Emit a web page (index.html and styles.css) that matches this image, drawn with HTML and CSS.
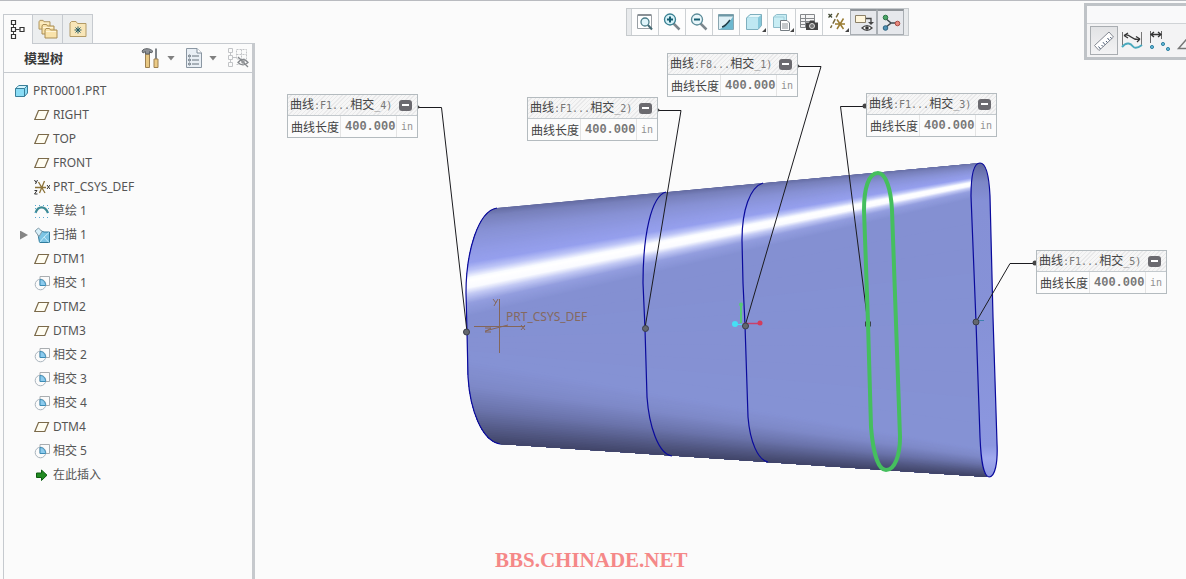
FILE: index.html
```html
<!DOCTYPE html>
<html lang="zh-CN">
<head>
<meta charset="utf-8">
<title>PRT0001.PRT</title>
<link rel="stylesheet" href="styles.css">
</head>
<body>
<svg class="sprite" aria-hidden="true">
  <symbol id="i-plane" viewBox="0 0 16 16"><path d="M4.500 3.500H14.500L10.800 12.500H.8Z" fill="#fffdf2" stroke="#7b6a4a" stroke-width="1.200"/></symbol>
  <symbol id="i-cross" viewBox="0 0 16 16"><path d="M6 1.500H15.500V10.500H6Z" fill="none" stroke="#a9adb0"/><circle cx="6.500" cy="9.500" r="5.300" fill="none" stroke="#a9b4bd"/><path d="M6 4.500C9.500 4.500 11.500 7 11.600 10.500H6Z" fill="#8ccbee" stroke="#3d8cb5"/></symbol>
  <symbol id="i-part" viewBox="0 0 16 16"><path d="M1.500 5.500L5 2.500H13.500V10L10.500 13.500H1.500Z" fill="#8adcf5" stroke="#3a7f9a"/><path d="M1.500 5.500H10.500V13.500M10.500 5.500L13.500 2.500" fill="none" stroke="#3a7f9a"/><path d="M2.500 5L5.200 3H12.500L10.300 5Z" fill="#d5f5fd"/></symbol>
  <symbol id="i-csys" viewBox="0 0 16 16"><path d="M1 8.500H12M4.500 3L11 14M10.500 2L5.500 14" fill="none" stroke="#8c7339" stroke-width="1.300"/><path d="M.5 1L2 3.500M3.500 1L1.500 5M.5 11.500H3L.5 15H3.500M13 6L16 10M16 6L13 10" fill="none" stroke="#333"/></symbol>
  <symbol id="i-sketch" viewBox="0 0 16 16"><path d="M1.500 10C4 2.500 11 2.500 14 10" fill="none" stroke="#3d8a94" stroke-width="2.200"/><path d="M1 2.500H15M1 14.500H15" stroke="#5aa8d0" stroke-dasharray="1 3"/><path d="M1.500 5V13M14.500 5V13" stroke="#5aa8d0" stroke-dasharray="1 3"/></symbol>
  <symbol id="i-sweep" viewBox="0 0 16 16"><path d="M4 7L6 3.500L10 5L15.500 5V15.500H5.500Z" fill="#7cc4e4" stroke="#2f7b9c"/><path d="M1 4L4.500 1L8 4.500L5 9.500Z" fill="#d8f0fa" stroke="#8199a6"/><path d="M5.500 15.500L10 10L15 5.500M10 10L15 15.500" fill="none" stroke="#c5ebf9"/></symbol>
  <symbol id="i-insert" viewBox="0 0 16 16"><path d="M2.500 6H7.500V3L13 8.200L7.500 13.500V10.500H2.500Z" fill="#218a21" stroke="#0d5d10"/></symbol>
  <symbol id="i-folder" viewBox="0 0 14 12"><path d="M1 11V3L2 1.500H5.500L6.500 3H13V11Z" fill="#f9e3ab" stroke="#a98d55"/><path d="M2 4.500H12" stroke="#fff5d8"/></symbol>
</svg>
<div class="app">
  <aside class="sidebar">
    <nav class="tabs" aria-label="导航器">
      <button class="tab tab-active" aria-label="模型树"><svg width="18" height="22" viewBox="0 0 18 22"><path d="M4.500 7V9M7 11.500H10.500M4.500 14V16" stroke="#444"/><g fill="#fff" stroke="#333" stroke-width="1.200"><path d="M2.500 2.500H6.500V6.500H2.500ZM2.500 9.500H6.500V13.500H2.500ZM11 9.500H15V13.500H11ZM2.500 16.500H6.500V20.500H2.500Z"/></g></svg></button>
      <button class="tab" aria-label="文件夹浏览器"><svg width="22" height="22" viewBox="0 0 22 22"><use href="#i-folder" x="1" y="1" width="13" height="11"/><use href="#i-folder" x="4" y="5" width="14" height="12"/><use href="#i-folder" x="7" y="9" width="14" height="12"/></svg></button>
      <button class="tab" aria-label="收藏夹"><svg width="20" height="20" viewBox="0 0 20 20"><path d="M2 17.500V4L3.500 2.500H8L9.500 4.500H18V17.500Z" fill="#f8e6b8" stroke="#b39b66"/><path d="M10 7.500V14.500M6.500 11H13.500M7.500 8.500L12.500 13.500M12.500 8.500L7.500 13.500" stroke="#245c66"/></svg></button>
    </nav>
    <section class="panel">
      <header class="panel-head">
        <h1 class="panel-title">模型树</h1>
        <button class="tool" aria-label="设置"><svg width="20" height="22" viewBox="0 0 20 22"><path d="M4.500 7H8.500V20.500H4.500Z" fill="#e8c883" stroke="#9d8050"/><path d="M1 4C3 .8 9 .8 12 4.500L10 6L8.500 4.500V7H4.500V4.500L2 6Z" fill="#8d9196" stroke="#5d6165"/><path d="M15 1.500V12" stroke="#7f8489" stroke-width="2"/><path d="M13 12H17V20.500H13Z" fill="#eccb86" stroke="#9d8050"/></svg></button>
        <button class="caret" aria-label="设置菜单"></button>
        <button class="tool" aria-label="显示"><svg width="18" height="22" viewBox="0 0 18 22"><path d="M1.500 1.500H12L16.500 6V20.500H1.500Z" fill="#e9eff5" stroke="#8b97a3"/><path d="M12 1.500V6H16.500" fill="#fff" stroke="#7f8c99"/><path d="M7 9H14M7 13H14M7 17H14" stroke="#67737d"/><g fill="none" stroke="#5e6a74"><circle cx="4.500" cy="9" r="1"/><circle cx="4.500" cy="13" r="1"/><circle cx="4.500" cy="17" r="1"/></g></svg></button>
        <button class="caret" aria-label="显示菜单"></button>
        <button class="tool" aria-label="隐藏项"><svg width="22" height="22" viewBox="0 0 22 22"><g fill="none" stroke="#c2c4c7"><path d="M1.500 1.500H5.500V5.500H1.500ZM1.500 8.500H5.500V12.500H1.500ZM1.500 15.500H5.500V19.500H1.500ZM3.500 5.500V8.500M3.500 12.500V15.500M5.500 10.500H10"/><path d="M9.500 2.500H19.500V12H9.500ZM14.500 2.500V12M9.500 7.500H19.500M9.500 17.500H13" stroke-dasharray="2 1"/></g><path d="M11 15.500C14 11.500 18 11.500 21 15.500C18 18.500 14 18.500 11 15.500ZM11 10L21 20" fill="none" stroke="#85888c" stroke-width="1.300"/><circle cx="16" cy="15" r="1.800" fill="#94979a"/></svg></button>
      </header>
      <ul class="tree">
        <li class="node node-root"><svg class="node-icon"><use href="#i-part"/></svg>PRT0001.PRT</li>
        <li class="node"><svg class="node-icon"><use href="#i-plane"/></svg>RIGHT</li>
        <li class="node"><svg class="node-icon"><use href="#i-plane"/></svg>TOP</li>
        <li class="node"><svg class="node-icon"><use href="#i-plane"/></svg>FRONT</li>
        <li class="node"><svg class="node-icon"><use href="#i-csys"/></svg>PRT_CSYS_DEF</li>
        <li class="node"><svg class="node-icon"><use href="#i-sketch"/></svg>草绘 1</li>
        <li class="node node-parent"><button class="expand" aria-label="展开"></button><svg class="node-icon"><use href="#i-sweep"/></svg>扫描 1</li>
        <li class="node"><svg class="node-icon"><use href="#i-plane"/></svg>DTM1</li>
        <li class="node"><svg class="node-icon"><use href="#i-cross"/></svg>相交 1</li>
        <li class="node"><svg class="node-icon"><use href="#i-plane"/></svg>DTM2</li>
        <li class="node"><svg class="node-icon"><use href="#i-plane"/></svg>DTM3</li>
        <li class="node"><svg class="node-icon"><use href="#i-cross"/></svg>相交 2</li>
        <li class="node"><svg class="node-icon"><use href="#i-cross"/></svg>相交 3</li>
        <li class="node"><svg class="node-icon"><use href="#i-cross"/></svg>相交 4</li>
        <li class="node"><svg class="node-icon"><use href="#i-plane"/></svg>DTM4</li>
        <li class="node"><svg class="node-icon"><use href="#i-cross"/></svg>相交 5</li>
        <li class="node"><svg class="node-icon"><use href="#i-insert"/></svg>在此插入</li>
      </ul>
    </section>
  </aside>

  <main class="viewport">
    <svg class="model" width="931" height="579" viewBox="255 0 931 579">
      <defs>
        <clipPath id="body"><path d="M497 208C478 211 466 252 466 293L467 332L468 377C470 410 482 441 500 444L988 477L995 440L985 180L980 163Z"/></clipPath>
        <linearGradient id="inner" x1="0" y1="0" x2="0" y2="1"><stop offset="0" stop-color="#5d649c"/><stop offset=".06" stop-color="#7c86c6"/><stop offset=".12" stop-color="#8590d6"/><stop offset=".5" stop-color="#8692d7"/><stop offset=".9" stop-color="#8c97e0"/><stop offset=".94" stop-color="#a0a9ee"/><stop offset="1" stop-color="#8c96df"/></linearGradient>
      </defs>
      <g id="surface" clip-path="url(#body)"></g>
      <path class="edge" fill="url(#inner)" d="M980 163C973 163 971 176 971 196L976 322L980 437C981 460 983 476 989 477C995 477 998 463 997 443L993 317L990 196C989 174 986 163 980 163Z"/>
      <path class="edge" d="M497 208C478 211 466 252 466 293L467 332L468 377C470 410 482 441 500 444"/>
      <path class="edge" d="M666 192C651 196 643 236 643 283L645 329L647 397C649 425 658 454 672 456"/>
      <path class="edge" d="M763 183C750 187 742 210 742 240L743 283L745 325L748 417C750 442 758 460 768 462"/>
      <g class="csys"><path d="M499.500 299V353M474 326.500H525M485 331L508 325M485 328H491L485 332H491M521 325L525 330M525 325L521 330M493 299L496 303M498 299L494 306"/></g>
      <text class="csys-label" x="506" y="321">PRT_CSYS_DEF</text>
      <path d="M741 323V304" stroke="#58c97a" stroke-width="2"/><circle cx="741" cy="304.500" r="2" fill="#58c97a"/>
      <path d="M744 323.500H760" stroke="#c8406c" stroke-width="1.500"/><circle cx="760" cy="323" r="2.500" fill="#d23c5c"/>
      <path d="M735 324.500H742" stroke="#45dff5"/><circle cx="735" cy="324" r="3" fill="#45dff5"/>
      <path d="M976 320.500H984" stroke="#3d7fae"/>
      <g class="leader">
        <path d="M418 107.500H441.500L467 332"/>
        <path d="M658 110.500H681L645 328"/>
        <path d="M798 66.500H821L745 326"/>
        <path d="M866 106.500H840.500L868 324"/>
        <path d="M1036 263.500H1010L976 322"/>
      </g>
      <path d="M865.500 321.500V326.500M870.500 321.500V326.500" stroke="#3c424a" stroke-width="1"/>
      <path class="picked" d="M878 173C868 173 864 190 864 210L868 323L871 427C873 452 878 470 886 470C895 470 900 455 900 437L896 323L892 210C891 190 886 173 878 173Z"/>
      <g class="anchor"><circle cx="466.500" cy="332" r="3"/><circle cx="645.500" cy="328.500" r="3"/><circle cx="745.500" cy="326" r="3"/><circle cx="976" cy="322" r="3"/></g>
      <g fill="#444"><circle cx="418" cy="107" r="1.500"/><circle cx="658" cy="110" r="1.500"/><circle cx="798" cy="66" r="1.500"/><circle cx="865" cy="106" r="2.500"/><circle cx="1035" cy="263" r="2.500"/></g>
    </svg>

    <div class="callout callout-4">
      <div class="callout-head"><span>曲线<span class="mono">:F1...</span>相交<span class="mono">_4)</span></span><button class="collapse" aria-label="折叠"></button></div>
      <div class="callout-row"><span class="key">曲线长度</span><strong class="num">400.000</strong><span class="unit">in</span></div>
    </div>
    <div class="callout callout-2">
      <div class="callout-head"><span>曲线<span class="mono">:F1...</span>相交<span class="mono">_2)</span></span><button class="collapse" aria-label="折叠"></button></div>
      <div class="callout-row"><span class="key">曲线长度</span><strong class="num">400.000</strong><span class="unit">in</span></div>
    </div>
    <div class="callout callout-1">
      <div class="callout-head"><span>曲线<span class="mono">:F8...</span>相交<span class="mono">_1)</span></span><button class="collapse" aria-label="折叠"></button></div>
      <div class="callout-row"><span class="key">曲线长度</span><strong class="num">400.000</strong><span class="unit">in</span></div>
    </div>
    <div class="callout callout-3">
      <div class="callout-head"><span>曲线<span class="mono">:F1...</span>相交<span class="mono">_3)</span></span><button class="collapse" aria-label="折叠"></button></div>
      <div class="callout-row"><span class="key">曲线长度</span><strong class="num">400.000</strong><span class="unit">in</span></div>
    </div>
    <div class="callout callout-5">
      <div class="callout-head"><span>曲线<span class="mono">:F1...</span>相交<span class="mono">_5)</span></span><button class="collapse" aria-label="折叠"></button></div>
      <div class="callout-row"><span class="key">曲线长度</span><strong class="num">400.000</strong><span class="unit">in</span></div>
    </div>

    <div class="viewbar" role="toolbar" aria-label="视图">
      <button class="vb" aria-label="重新调整"><svg viewBox="0 0 20 20"><path d="M2.500 3.500H16.500V16.500H2.500Z" fill="#fff" stroke="#9aa0a5"/><path d="M2.500 3H16.500" stroke="#8a9095" stroke-width="2"/><path d="M12.500 12.500L17 17.500" stroke="#456a74" stroke-width="2"/><circle cx="10" cy="10" r="4" fill="#dff4fa" stroke="#4a7c88" stroke-width="1.300"/></svg></button>
      <button class="vb" aria-label="放大"><svg viewBox="0 0 20 20"><path d="M11.500 11.500L17.500 17.500" stroke="#7d878d" stroke-width="2.500"/><circle cx="8" cy="7.500" r="5.500" fill="#d6f2f8" stroke="#387f91" stroke-width="1.300"/><path d="M8 4.500V10.500M5 7.500H11" stroke="#155c70" stroke-width="2"/></svg></button>
      <button class="vb" aria-label="缩小"><svg viewBox="0 0 20 20"><path d="M11.500 11.500L17.500 17.500" stroke="#7d878d" stroke-width="2.500"/><circle cx="8" cy="7.500" r="5.500" fill="#e8f6fa" stroke="#5b8b98" stroke-width="1.300"/><path d="M5 7.500H11" stroke="#155c70" stroke-width="2"/></svg></button>
      <button class="vb" aria-label="重画"><svg viewBox="0 0 20 20"><path d="M2.500 2.500H17.500V17.500H2.500Z" fill="#dff0f6" stroke="#8aa6b0"/><path d="M2.500 2.500H17.500V4.500H2.500Z" fill="#6d98a6"/><path d="M17 4.500V17.500H3C10 14 13 11 17 4.500Z" fill="#6db8cf"/><path d="M6 15C9 14.500 11 12 14 8" fill="none" stroke="#1f3f4a" stroke-width="1.600"/></svg></button>
      <button class="vb vb-menu" aria-label="显示样式"><svg viewBox="0 0 20 20"><path d="M2.500 6L6 2.500H17.500V13.500L14 17.500H2.500Z" fill="#86c8da" stroke="#7eafbe"/><path d="M3 6H14V17H3Z" fill="#bfe8f2"/><path d="M3.500 5.500L6.500 3H17L14 5.500Z" fill="#e6f8fb"/></svg></button>
      <button class="vb vb-menu" aria-label="已保存方向"><svg viewBox="0 0 20 20"><path d="M1.500 5L4.500 2.500H14.500V12L12 15.500H1.500Z" fill="#c8edf4" stroke="#8ebcca"/><path d="M1.500 5H12V15" fill="none" stroke="#9fcfdb"/><path d="M8.500 8.500H15L17.500 11V18.500H8.500Z" fill="#fff" stroke="#747c82"/><path d="M10 12H16M10 14H16M10 16H16" stroke="#8b9297"/></svg></button>
      <button class="vb" aria-label="视图管理器"><svg viewBox="0 0 20 20"><path d="M1.500 2.500H15.500V15.500H1.500ZM1.500 6.500H15.500M1.500 9.500H15.500M1.500 12.500H15.500M6.500 2.500V15.500" fill="#f5f5f5" stroke="#85888b"/><path d="M7 10.500H10L11 8.500H15L16 10.500H19V18H7Z" fill="#444"/><circle cx="13" cy="14" r="2.500" fill="#777" stroke="#ddd"/></svg></button>
      <button class="vb vb-menu" aria-label="基准显示过滤器"><svg viewBox="0 0 20 20"><path d="M1.500 2L5 5.500M5 2L1.500 5.500" stroke="#3d4630" stroke-width="1.300"/><path d="M11.500 1L3.500 16" stroke="#786a3c" stroke-width="1.500" stroke-dasharray="5 2"/><path d="M8 12H18M10 7.500L16.500 17M16.500 6.500L10 17" stroke="#9a7c32" stroke-width="1.500"/></svg></button>
      <button class="vb vb-on" aria-pressed="true" aria-label="注释显示"><svg viewBox="0 0 20 20"><path d="M1.500 2.500H11.500V9.500H1.500Z" fill="#fff6dc" stroke="#8b8068"/><path d="M12 5.500H17V9.500" fill="none" stroke="#444" stroke-width="1.300"/><path d="M14 9H20L17 12Z" fill="#444"/><path d="M8 15C11 11.800 15 11.800 18 15C15 18 11 18 8 15Z" fill="#fff" stroke="#444" stroke-width="1.300"/><circle cx="13" cy="15" r="1.800" fill="#333"/></svg></button>
      <button class="vb vb-on" aria-pressed="true" aria-label="旋转中心"><svg viewBox="0 0 20 20"><path d="M4 5L10 10L4 15M10 10H17" fill="none" stroke="#3f4a50" stroke-width="1.500"/><circle cx="4.500" cy="4.500" r="2.300" fill="#4aa568" stroke="#2c7444"/><circle cx="4.500" cy="15" r="2.300" fill="#4f91b5" stroke="#2c6380"/><circle cx="16.500" cy="10.500" r="2.300" fill="#e8897e" stroke="#a94e45"/></svg></button>
    </div>

    <div class="measure" role="toolbar" aria-label="测量">
      <div class="measure-title"></div>
      <div class="measure-tools">
        <button class="mt mt-on" aria-label="汇总"><svg viewBox="0 0 24 24"><path d="M2.500 16.500L17 3L21.500 8L7 21.500Z" fill="#fff" stroke="#858a93"/><path d="M8.500 20L6.500 17.500M11 17.500L9.500 16M13 15.700L11 13.200M15.300 13.500L14 12M17.500 11.500L15.500 9M19.500 9.500L18.300 8" stroke="#45566f"/></svg></button>
        <button class="mt" aria-label="长度"><svg viewBox="0 0 24 24"><path d="M2.500 3V16M21.500 3V16" stroke="#777"/><path d="M4 6.500C10 3 12 13 20 10M4 6.500L8 4M4 6.500L8 9M20 10L16 7.500M20 10L17 13" fill="none" stroke="#333" stroke-width="1.300"/><path d="M2 18C7 12 11 15 13 17.500S18 19 22 16" fill="none" stroke="#4aa9bd" stroke-width="2"/></svg></button>
        <button class="mt" aria-label="距离"><svg viewBox="0 0 24 24"><path d="M2.500 2V14M13.500 2V10" stroke="#666"/><path d="M3 5.500H13M6 3L3 5.500L6 8M10 3L13 5.500L10 8" fill="none" stroke="#333" stroke-width="1.300"/><g fill="#63b6d6" stroke="#3686a5"><circle cx="4" cy="18" r="1.600"/><circle cx="15" cy="15" r="1.600"/><circle cx="20" cy="20" r="1.600"/></g></svg></button>
        <button class="mt" aria-label="角度"><svg viewBox="0 0 24 24"><path d="M15 5L2.500 19.500H20" fill="none" stroke="#777" stroke-width="1.500"/></svg></button>
      </div>
    </div>

    <p class="watermark">BBS.CHINADE.NET</p>
  </main>
</div>
<script src="surface.js"></script>
</body>
</html>
```
FILE: styles.css
```css
* { box-sizing: border-box; }
body { margin: 0; background: #fbfbfb; color: #555; font: 12px/16px "Noto Sans", "Noto Sans CJK SC", sans-serif; }
button { margin: 0; padding: 0; border: 0; background: none; font: inherit; color: inherit; }
svg { display: block; }
.sprite { position: absolute; width: 0; height: 0; }
.app { display: flex; min-height: 100vh; border-top: 1px solid #b9bbc0; }

.sidebar { display: flex; flex-direction: column; flex: none; width: 255px; padding: 13px 0 0 3px; }
.tabs { display: flex; height: 29px; }
.tab { display: flex; align-items: center; justify-content: center; width: 30px; border: 1px solid #c6cacf; border-left: 0; border-bottom: 0; background: #eceeef; }
.tab-active { position: relative; margin-bottom: -1px; border-left: 1px solid #c6cacf; background: #fbfbfb; }
.tab-active svg { margin-bottom: 2px; }
.panel { flex: 1; border: 1px solid #c6cacf; border-right: 3px solid #c6c9cd; border-bottom: 0; }
.panel-head { display: flex; align-items: center; height: 29px; padding-right: 3px; border-bottom: 1px solid #c6cacf; }
.panel-title { flex: 1; margin: 0 0 0 20px; font-size: 13px; line-height: 16px; font-weight: 700; color: #3a3a3a; }
.caret { width: 8px; height: 5px; margin: 0 10px 0 6px; background: #808080; clip-path: polygon(0 0, 100% 0, 50% 100%); }

.tree { margin: 0; padding: 6px 0 0; list-style: none; }
.node { display: flex; align-items: center; gap: 3px; height: 24px; padding-left: 30px; white-space: nowrap; }
.node-root { padding-left: 10px; }
.node-parent { padding-left: 16px; }
.node-icon { flex: none; width: 16px; height: 16px; }
.expand { width: 8px; height: 9px; margin-right: 3px; background: #858585; clip-path: polygon(0 0, 100% 50%, 0 100%); }

.viewport { position: relative; flex: 1; min-width: 0; overflow: hidden; }
.model { position: absolute; left: 0; top: -1px; }
.edge { stroke: #0a0a9c; stroke-width: 1.200; }
.edge:not([fill]) { fill: none; }
.leader { fill: none; stroke: #1b1b1f; stroke-width: 1; }
.picked { fill: none; stroke: #45bf5e; stroke-width: 4; }
.anchor { fill: #63676e; stroke: #3b3e48; stroke-width: 1; }
.csys { fill: none; stroke: #84665a; stroke-width: 1; }
.csys-label { font-size: 12px; fill: #85695f; }

.callout { position: absolute; width: 131px; border: 1px solid #b4bbbf; background: #fcfcfc; font: 12px/20px "Noto Sans CJK SC", sans-serif; color: #444; white-space: nowrap; }
.callout-4 { left: 32px; top: 93px; }
.callout-2 { left: 272px; top: 96px; }
.callout-1 { left: 412px; top: 52px; }
.callout-3 { left: 611px; top: 92px; }
.callout-5 { left: 781px; top: 249px; }
.callout-head { display: flex; align-items: center; justify-content: space-between; height: 21px; padding: 0 5px 0 2px; border-bottom: 1px solid #c3c9cd; background: repeating-linear-gradient(135deg, #f6f6f6 0 2px, #e9e9ea 2px 3px); }
.mono { font: 10px/20px "DejaVu Sans Mono", monospace; color: #777; }
.collapse { display: flex; align-items: center; justify-content: center; width: 13px; height: 11px; border-radius: 3px; background: #6b6a6f; }
.collapse::before { content: ""; width: 7px; height: 2px; background: #fff; }
.callout-row { display: flex; height: 21px; padding-left: 3px; line-height: 22px; }
.key { width: 50px; border-right: 1px solid #e4e4e4; }
.num { width: 56px; padding-left: 4px; border-right: 1px solid #e4e4e4; font: bold 12px/22px "Liberation Mono", monospace; color: #777; }
.unit { padding-left: 4px; font: 10px/22px "DejaVu Sans Mono", monospace; color: #909090; }

.viewbar { position: absolute; left: 371px; top: 7px; display: flex; height: 28px; padding: 0 4px; border: 1px solid #c6cacd; background: #e8eaec; }
.vb { position: relative; display: flex; align-items: center; justify-content: center; width: 27px; border-left: 1px solid #cdd1d4; background: #fdfdfd; }
.vb svg { width: 20px; height: 20px; }
.vb-menu { width: 28px; }
.vb-menu::after { content: ""; position: absolute; right: 1px; bottom: 3px; width: 4px; height: 4px; background: #444; clip-path: polygon(100% 0, 100% 100%, 0 100%); }
.vb-on { border: 1px solid #a9aeb3; border-top: 2px solid #90959a; background: #e6e8ec; }

.measure { position: absolute; right: 0; top: 2px; width: 102px; height: 57px; overflow: hidden; border: 3px solid #bfc3c7; border-right: 0; background: #f3f3f4; }
.measure-title { height: 18px; border-bottom: 1px solid #d0d3d6; background: #f9f9fa; }
.measure-tools { display: flex; padding: 2px 0 0 3px; }
.mt { display: flex; flex: none; align-items: center; justify-content: center; width: 28px; height: 29px; }
.mt svg { width: 24px; height: 24px; }
.mt-on { border: 1px solid #a9adb1; background: linear-gradient(#e2e3e5, #f3f3f4); }

.watermark { position: absolute; left: 240px; bottom: 7px; margin: 0; font: bold 21px/24px "Liberation Serif", serif; color: #f58888; }
```
FILE: surface.js
```js
// Shading bands of the lofted surface: height at the left end, height at the right end, colour.
const LEFT = 460, RIGHT = 1000;
const stops = [
  [210, 159, [96, 103, 156]],
  [218, 163, [120, 129, 188]],
  [232, 167, [135, 145, 212]],
  [250, 170, [144, 154, 228]],
  [264, 173, [150, 160, 238]],
  [272, 175, [190, 198, 247]],
  [279, 177, [248, 250, 255]],
  [282, 178, [255, 255, 255]],
  [289, 180, [250, 251, 255]],
  [296, 182, [192, 199, 243]],
  [305, 185, [146, 157, 222]],
  [318, 192, [132, 144, 210]],
  [358, 452, [133, 146, 212]],
  [383, 459, [126, 137, 200]],
  [407, 466, [106, 115, 170]],
  [427, 472, [82, 88, 131]],
  [446, 479, [58, 61, 94]],
  [462, 490, [50, 52, 80]]
];
const surface = document.getElementById("surface");
const steps = 10;
for (let i = 0; i < stops.length - 1; i++) {
  const [l0, r0, c0] = stops[i];
  const [l1, r1, c1] = stops[i + 1];
  for (let s = 0; s < steps; s++) {
    const t = s / steps;
    const l = l0 + (l1 - l0) * t;
    const r = r0 + (r1 - r0) * t;
    const c = c0.map((v, k) => Math.round(v + (c1[k] - v) * t));
    const band = document.createElementNS("http://www.w3.org/2000/svg", "polygon");
    band.setAttribute("points", `${LEFT},${l} ${RIGHT},${r} ${RIGHT},500 ${LEFT},500`);
    band.setAttribute("fill", `rgb(${c.join(",")})`);
    surface.appendChild(band);
  }
}
```
